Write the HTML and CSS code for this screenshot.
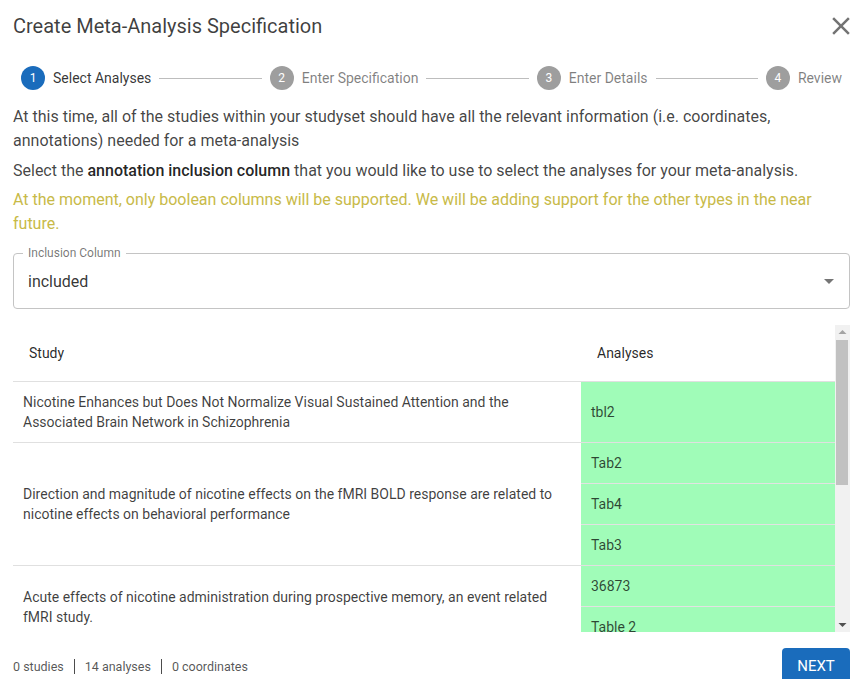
FILE: index.html
```html
<!DOCTYPE html>
<html lang="en">
<head>
<meta charset="utf-8">
<title>Create Meta-Analysis Specification</title>
<link rel="stylesheet" href="styles.css">
</head>
<body>
<div class="dialog">
  <div class="dialog-header">
    <h1 class="dialog-title">Create Meta-Analysis Specification</h1>
    <svg class="close-icon" viewBox="0 0 24 24" width="30" height="30" aria-label="close"><path d="M19 6.41 17.59 5 12 10.59 6.41 5 5 6.41 10.59 12 5 17.59 6.41 19 12 13.41 17.59 19 19 17.59 13.41 12z"/></svg>
  </div>

  <div class="stepper">
    <div class="step active"><span class="step-icon">1</span><span class="step-label">Select Analyses</span></div>
    <div class="connector"></div>
    <div class="step"><span class="step-icon">2</span><span class="step-label">Enter Specification</span></div>
    <div class="connector"></div>
    <div class="step"><span class="step-icon">3</span><span class="step-label">Enter Details</span></div>
    <div class="connector"></div>
    <div class="step"><span class="step-icon">4</span><span class="step-label">Review</span></div>
  </div>

  <p class="text first">At this time, all of the studies within your studyset should have all the relevant information (i.e. coordinates, annotations) needed for a meta-analysis</p>
  <p class="text">Select the <strong>annotation inclusion column</strong> that you would like to use to select the analyses for your meta-analysis.</p>
  <p class="text warning">At the moment, only boolean columns will be supported. We will be adding support for the other types in the near future.</p>

  <fieldset class="select">
    <legend class="select-label">Inclusion Column</legend>
    <div class="select-row">
      <span class="select-value">included</span>
      <svg class="select-arrow" viewBox="0 0 24 24" width="24" height="24"><path d="M7 10l5 5 5-5z"/></svg>
    </div>
  </fieldset>

  <div class="table-frame">
    <div class="table-scroll">
      <div class="table">
        <div class="thead">
          <div class="th study-col">Study</div>
          <div class="th analyses-col">Analyses</div>
        </div>
        <div class="tr">
          <div class="td study-col">Nicotine Enhances but Does Not Normalize Visual Sustained Attention and the Associated Brain Network in Schizophrenia</div>
          <div class="analyses-col analyses">
            <div class="analysis">tbl2</div>
          </div>
        </div>
        <div class="tr">
          <div class="td study-col">Direction and magnitude of nicotine effects on the fMRI BOLD response are related to nicotine effects on behavioral performance</div>
          <div class="analyses-col analyses">
            <div class="analysis">Tab2</div>
            <div class="analysis">Tab4</div>
            <div class="analysis">Tab3</div>
          </div>
        </div>
        <div class="tr">
          <div class="td study-col">Acute effects of nicotine administration during prospective memory, an event related fMRI study.</div>
          <div class="analyses-col analyses">
            <div class="analysis">36873</div>
            <div class="analysis">Table 2</div>
          </div>
        </div>
        <div class="tr">
          <div class="td study-col">Effects of nicotine on neural activity during attention tasks in smokers and nonsmokers</div>
          <div class="analyses-col analyses">
            <div class="analysis">Table 3</div>
            <div class="analysis">Table 4</div>
            <div class="analysis">Table 5</div>
          </div>
        </div>
      </div>
    </div>
    <div class="scrollbar" aria-hidden="true">
      <div class="sb-button">
        <svg viewBox="0 0 15 15" width="15" height="15"><polygon class="sb-up" points="3.5,9 7.5,5 11.5,9"/></svg>
      </div>
      <div class="sb-track"><div class="sb-thumb"></div></div>
      <div class="sb-button">
        <svg viewBox="0 0 15 15" width="15" height="15"><polygon class="sb-down" points="3.5,6 11.5,6 7.5,10"/></svg>
      </div>
    </div>
  </div>

  <div class="dialog-footer">
    <div class="summary">
      <span>0 studies</span><span class="sep"></span><span>14 analyses</span><span class="sep"></span><span>0 coordinates</span>
    </div>
    <button class="next-btn" type="button">NEXT</button>
  </div>
</div>
</body>
</html>
```

FILE: styles.css
```css
html, body {
  margin: 0;
  padding: 0;
  background: #ffffff;
  overflow: hidden;
}

body {
  font-family: Roboto, "Liberation Sans", Arial, sans-serif;
  color: rgba(0, 0, 0, 0.8);
}

.dialog {
  padding: 10px 14px 0 13px;
}

.dialog-header {
  display: flex;
  align-items: center;
  justify-content: space-between;
  height: 32px;
  margin-right: -6px;
}

.dialog-title {
  margin: 0;
  font-size: 20px;
  font-weight: 400;
  line-height: 32px;
  color: rgba(0, 0, 0, 0.76);
}

.close-icon {
  fill: #737373;
  display: block;
}

/* Stepper */
.stepper {
  display: flex;
  align-items: center;
  margin-top: 24px;
  height: 24px;
}

.step {
  display: flex;
  align-items: center;
  padding: 0 8px;
}

.step-icon {
  width: 24px;
  height: 24px;
  border-radius: 50%;
  background: #9e9e9e;
  color: #ffffff;
  font-size: 12px;
  display: flex;
  align-items: center;
  justify-content: center;
}

.step.active .step-icon {
  background: #1a6cbc;
}

.step-label {
  margin-left: 8px;
  font-size: 14px;
  color: rgba(0, 0, 0, 0.5);
}

.step.active .step-label {
  color: rgba(0, 0, 0, 0.8);
}

.connector {
  flex: 1 1 auto;
  border-top: 1px solid #bdbdbd;
}

/* Texts */
.text {
  margin: 6px 0 0;
  font-size: 16px;
  line-height: 24px;
  color: rgba(0, 0, 0, 0.74);
}

.text.first {
  margin-top: 15px;
}

.text strong {
  font-weight: 500;
  color: rgba(0, 0, 0, 0.87);
}

.text.warning {
  margin-top: 5px;
  color: #c8ba48;
}

/* Select */
.select {
  margin: 10px 0 0;
  padding: 0 8px 0 9px;
  border: 1px solid #c4c4c4;
  border-radius: 4px;
  min-width: 0;
}

.select-label {
  padding: 0 5px;
  font-size: 12px;
  line-height: 14px;
  color: rgba(0, 0, 0, 0.55);
}

.select-row {
  display: flex;
  align-items: center;
  justify-content: space-between;
  height: 42px;
  margin-bottom: 6px;
  padding-left: 5px;
}

.select-value {
  font-size: 16px;
  color: rgba(0, 0, 0, 0.8);
}

.select-arrow {
  fill: rgba(0, 0, 0, 0.54);
  display: block;
}

/* Table area with a classic scrollbar */
.table-frame {
  margin-top: 16px;
  height: 307px;
  display: flex;
}

.table-scroll {
  flex: 1 1 auto;
  min-width: 0;
  overflow: hidden;
}

.scrollbar {
  flex: 0 0 15px;
  width: 15px;
  background: #f1f1f1;
  display: flex;
  flex-direction: column;
}

.sb-button {
  height: 15px;
  flex: 0 0 15px;
}

.sb-button svg {
  display: block;
}

.sb-up {
  fill: #a3a3a3;
}

.sb-down {
  fill: #505050;
}

.sb-track {
  flex: 1 1 auto;
}

.sb-thumb {
  margin: 0 2px 0 1px;
  height: 145px;
  background: #c1c1c1;
}

.table {
  font-size: 14px;
}

.thead {
  display: flex;
  height: 56px;
  border-bottom: 1px solid #e0e0e0;
  align-items: center;
}

.th {
  padding-left: 16px;
  font-weight: 400;
  box-sizing: border-box;
  color: rgba(0, 0, 0, 0.85);
}

.study-col {
  width: 568px;
  flex: 0 0 568px;
  box-sizing: border-box;
}

.analyses-col {
  flex: 1 1 auto;
}

.tr {
  display: flex;
  border-bottom: 1px solid #e0e0e0;
}

.td {
  padding: 10px;
  line-height: 20px;
  display: flex;
  align-items: center;
  color: rgba(0, 0, 0, 0.76);
}

.analyses {
  display: flex;
  flex-direction: column;
}

.analysis {
  flex: 1 1 auto;
  min-height: 40px;
  display: flex;
  align-items: center;
  padding-left: 10px;
  background: #a0fcb8;
  color: rgba(0, 0, 0, 0.72);
  border-bottom: 1px solid #e2e2e2;
}

.analysis:last-child {
  border-bottom: 0;
}

/* Footer */
.dialog-footer {
  margin-top: 16px;
  display: flex;
  align-items: center;
  justify-content: space-between;
}

.summary {
  display: flex;
  align-items: center;
  font-size: 12.5px;
  color: rgba(0, 0, 0, 0.68);
}

.sep {
  width: 1px;
  height: 15px;
  background: rgba(0, 0, 0, 0.7);
  margin: 0 10px;
}

.next-btn {
  height: 36px;
  width: 68px;
  padding: 0;
  border: 0;
  border-radius: 4px;
  background: #1a6cbc;
  color: #ffffff;
  font-family: Roboto, "Liberation Sans", Arial, sans-serif;
  font-size: 15px;
  font-weight: 400;
  letter-spacing: 0;
}
```
